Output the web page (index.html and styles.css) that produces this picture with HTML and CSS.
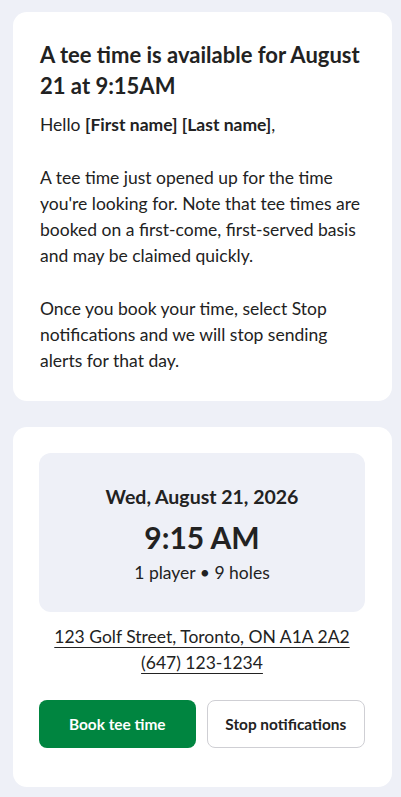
FILE: index.html
```html
<!DOCTYPE html>
<html lang="en">

<head>
    <meta charset="UTF-8">
    <meta name="viewport" content="width=device-width, initial-scale=1.0">
    <title>Tee time available</title>
    <link rel="stylesheet" href="styles.css">
</head>

<body>
    <div class="page">
        <!-- Message -->
        <div class="card message">
            <h1>A tee time is available for August 21 at 9:15AM</h1>
            <p class="greeting">Hello <strong>[First name] [Last name]</strong>,</p>
            <p>A tee time just opened up for the time you're looking for. Note that tee times are booked on a
                first-come, first-served basis and may be claimed quickly.</p>
            <p>Once you book your time, select Stop notifications and we will stop sending alerts for that day.</p>
        </div>

        <!-- Tee time details -->
        <div class="card booking">
            <div class="slot">
                <div class="slot-date">Wed, August 21, 2026</div>
                <div class="slot-time">9:15 AM</div>
                <div class="slot-info">1 player &bull; 9 holes</div>
            </div>

            <div class="contact">
                <a href="#" class="address">123 Golf Street, Toronto, ON A1A 2A2</a>
                <a href="#" class="phone">(647) 123-1234</a>
            </div>

            <div class="actions">
                <button class="btn btn-primary">Book tee time</button>
                <button class="btn btn-secondary">Stop notifications</button>
            </div>
        </div>
    </div>
</body>

</html>
```

FILE: styles.css
```css
body {
    font-family: Lato, "Open Sans", sans-serif;
    margin: 0;
    background-color: #eef0f7;
    color: #222;
}

.page {
    display: flex;
    flex-direction: column;
    gap: 26px;
    padding: 12px 9px 10px 13px;
}

.card {
    background-color: #ffffff;
    border-radius: 14px;
}

.message {
    padding: 27px 27px 27px;
}

h1 {
    font-size: 22px;
    line-height: 31px;
    font-weight: 700;
    margin: 0 0 11px;
}

.message p {
    font-size: 17.5px;
    line-height: 26px;
    margin: 0 0 27px;
}

.message p:last-child {
    margin-bottom: 0;
}

.greeting strong {
    font-weight: 700;
}

.booking {
    padding: 26px 27px 39px 26px;
}

.slot {
    background-color: #eef0f7;
    border-radius: 12px;
    padding: 31px 16px 30px;
    text-align: center;
}

.slot-date {
    font-size: 19.5px;
    line-height: 26px;
    font-weight: 700;
}

.slot-time {
    font-size: 30px;
    line-height: 54px;
    font-weight: 700;
}

.slot-info {
    font-size: 17.5px;
    line-height: 18px;
}

.contact {
    display: flex;
    flex-direction: column;
    align-items: center;
    margin-top: 12px;
}

.contact a {
    font-size: 17.5px;
    line-height: 26px;
    color: #222;
    text-decoration: underline;
    text-decoration-thickness: 1px;
    text-underline-offset: 4px;
}

.address {
    text-decoration-color: #444;
}

.phone {
    text-decoration-color: #aaa;
}

.actions {
    display: flex;
    gap: 11px;
    margin-top: 24px;
}

.btn {
    flex: 1;
    height: 48px;
    border-radius: 8px;
    font-family: inherit;
    font-size: 15.4px;
    font-weight: 700;
    cursor: pointer;
}

.btn-primary {
    background-color: #008540;
    border: none;
    color: #ffffff;
}

.btn-secondary {
    background-color: #ffffff;
    border: 1px solid #cfcfd4;
    color: #222;
}
```
